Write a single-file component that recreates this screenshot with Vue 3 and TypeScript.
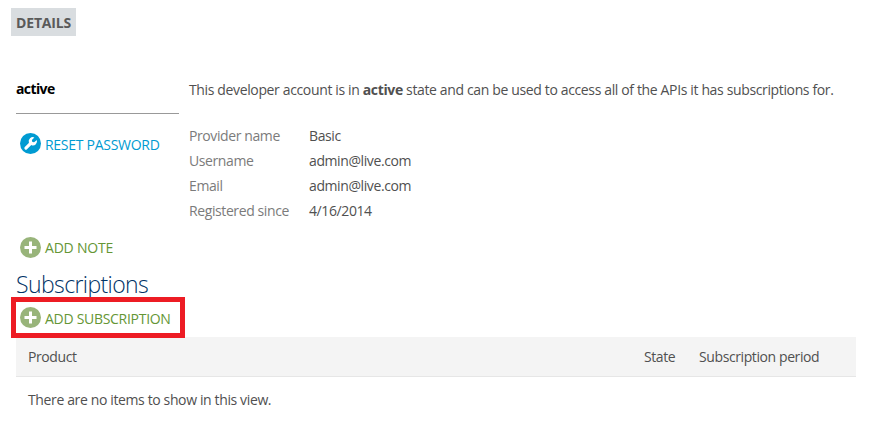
<script setup lang="ts">
interface Detail {
  label: string
  value: string
}

const details: Detail[] = [
  { label: 'Provider name', value: 'Basic' },
  { label: 'Username', value: 'admin@live.com' },
  { label: 'Email', value: 'admin@live.com' },
  { label: 'Registered since', value: '4/16/2014' },
]
</script>

<template>
  <main class="page">
    <span class="tab">DETAILS</span>

    <section class="account">
      <aside class="side">
        <div class="status">active</div>
        <a class="action reset">
          <svg class="icon" viewBox="0 0 21 21">
            <circle cx="10.5" cy="10.5" r="10.5" fill="#009bd2" />
            <path d="M5.9 15.2 L11.2 9.9" stroke="#fff" stroke-width="3.1" stroke-linecap="round" />
            <path d="M14.4 4.4 A4.2 4.2 0 0 0 8.8 9.4 L11.6 12.3 A4.2 4.2 0 0 0 16.8 6.9 L14.1 9.3 L12.2 8.9 L11.9 7 Z" fill="#fff" />
          </svg>
          <span>RESET PASSWORD</span>
        </a>
      </aside>
      <div class="info">
        <p class="summary">
          This developer account is in <b>active</b> state and can be used to access all of the APIs it has subscriptions for.
        </p>
        <dl class="details">
          <template v-for="d in details" :key="d.label">
            <dt>{{ d.label }}</dt>
            <dd>{{ d.value }}</dd>
          </template>
        </dl>
      </div>
    </section>

    <a class="action note">
      <svg class="icon" viewBox="0 0 21 21">
        <circle cx="10.5" cy="10.5" r="10.5" fill="#98b47a" />
        <path d="M10.5 4.5 V16.5 M4.5 10.5 H16.5" stroke="#fff" stroke-width="3" />
      </svg>
      <span>ADD NOTE</span>
    </a>

    <h2 class="title">Subscriptions</h2>

    <div class="highlight">
      <a class="action subscribe">
        <svg class="icon" viewBox="0 0 21 21">
          <circle cx="10.5" cy="10.5" r="10.5" fill="#98b47a" />
          <path d="M10.5 4.5 V16.5 M4.5 10.5 H16.5" stroke="#fff" stroke-width="3" />
        </svg>
        <span>ADD SUBSCRIPTION</span>
      </a>
    </div>

    <div class="table">
      <div class="head">
        <span>Product</span>
        <span>State</span>
        <span>Subscription period</span>
      </div>
      <div class="empty">There are no items to show in this view.</div>
    </div>
  </main>
</template>

<style>
body {
  background: #fff;
}
</style>

<style scoped>
.page {
  box-sizing: border-box;
  width: 873px;
  height: 422px;
  padding: 8px 17px 0 16px;
  display: flex;
  flex-direction: column;
  align-items: flex-start;
  overflow: hidden;
  font-family: "Open Sans", "Noto Sans", sans-serif;
  font-size: 14px;
  line-height: 20px;
  letter-spacing: -0.4px;
  color: #505050;
  white-space: nowrap;
}
.page > * {
  flex: none;
}
.tab {
  box-sizing: border-box;
  width: 65px;
  height: 28px;
  margin-left: -5px;
  padding-left: 5px;
  line-height: 30px;
  background: #d9dde0;
  color: #5a5a5a;
  font-weight: 700;
  letter-spacing: -0.15px;
}
.account {
  display: grid;
  grid-template-columns: 163px 1fr;
  column-gap: 10px;
  height: 157px;
  margin-top: 43px;
}
.status {
  box-sizing: border-box;
  height: 35px;
  border-bottom: 1px solid #999;
  color: #000;
  font-weight: 700;
  letter-spacing: -0.6px;
}
.action {
  display: flex;
  gap: 4px;
  height: 21px;
  margin-left: 4px;
  line-height: 24px;
  color: #659635;
}
.icon {
  flex: none;
  width: 21px;
  height: 21px;
}
.reset {
  margin-top: 19px;
  color: #009bd2;
  letter-spacing: -0.28px;
}
.summary {
  margin: 0 0 23px;
  height: 22px;
  line-height: 22px;
  letter-spacing: -0.36px;
}
.details {
  display: grid;
  grid-template-columns: 120px auto;
  grid-auto-rows: 25px;
  margin: 0;
  line-height: 24px;
}
.details dt {
  color: #7b7b7b;
}
.details dd {
  margin: 0;
}
.note {
  margin-top: 1px;
  line-height: 22px;
  letter-spacing: -0.2px;
}
.title {
  margin: 11px 0 0;
  height: 28px;
  line-height: 31px;
  font-size: 23px;
  font-weight: 300;
  letter-spacing: -0.6px;
  color: #003366;
}
.highlight {
  box-sizing: border-box;
  width: 174px;
  height: 41px;
  margin: 0 0 -1px -5px;
  padding-top: 5px;
  border: 5px solid #ed1c24;
  position: relative;
  z-index: 1;
}
.subscribe {
  line-height: 24px;
  letter-spacing: -0.29px;
}
.table {
  width: 840px;
}
.head {
  display: grid;
  grid-template-columns: 616px 55px auto;
  box-sizing: border-box;
  height: 40px;
  padding-left: 12px;
  line-height: 40px;
  background: #f4f4f4;
  border-bottom: 1px solid #e6e6e6;
}
.empty {
  padding-left: 12px;
  line-height: 46px;
  letter-spacing: -0.37px;
}
</style>
